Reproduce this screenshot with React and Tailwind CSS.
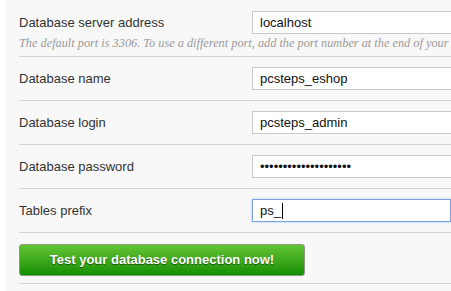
import React from "react";

function Row({ label, value, type, focused, hint, first }) {
  return (
    <div className={`border-b border-[#d4d4d4] ${first ? "pt-[11px] pb-[4px]" : "py-[10px]"}`}>
      <div className="flex items-center">
        <div className="w-[233px] shrink-0 text-[13px] text-[#333] font-['Liberation_Sans',Arial,sans-serif]">
          {label}
        </div>
        <div
          className={`relative flex-1 h-[23px] bg-white flex items-center pl-[7px] text-[13px] text-[#111] font-['Liberation_Sans',Arial,sans-serif] ${
            focused
              ? "border border-[#7da2e3] shadow-[0_0_2px_#9cbcf0]"
              : "border border-[#c8c8c8] border-r-0"
          }`}
        >
          {type === "password" ? (
            <span className="text-[13px] leading-none">{value}</span>
          ) : (
            <span>{value}</span>
          )}
          {focused && <span className="ml-[1px] w-px h-[16px] bg-black" />}
        </div>
      </div>
      {hint && (
        <div className="mt-[1px] whitespace-nowrap italic text-[12.3px] leading-[17px] text-[#9a9a9a] font-['Liberation_Serif',Georgia,serif]">
          {hint}
        </div>
      )}
    </div>
  );
}

export default function App() {
  return (
    <div className="flex w-[451px] h-[291px] overflow-hidden bg-white">
      <div className="w-[5px] shrink-0 bg-white" />
      <div className="flex-1 bg-[#f8f8f8] pl-[14px] overflow-hidden">
        <Row
          first
          label="Database server address"
          value="localhost"
          hint="The default port is 3306. To use a different port, add the port number at the end of your"
        />
        <Row label="Database name" value="pcsteps_eshop" />
        <Row label="Database login" value="pcsteps_admin" />
        <Row label="Database password" value="••••••••••••••••••••" type="password" />
        <Row label="Tables prefix" value="ps_" focused />
        <div className="border-b border-[#d4d4d4] pt-[11px] pb-[7px]">
          <button className="block w-[286px] h-[32px] rounded-[3px] border border-[#8a9a86] bg-gradient-to-b from-[#62c432] to-[#0b8f00] text-white font-bold text-[13px] font-['Liberation_Sans',Arial,sans-serif] [text-shadow:0_1px_1px_rgba(0,0,0,0.5)]">
            Test your database connection now!
          </button>
        </div>
      </div>
    </div>
  );
}
